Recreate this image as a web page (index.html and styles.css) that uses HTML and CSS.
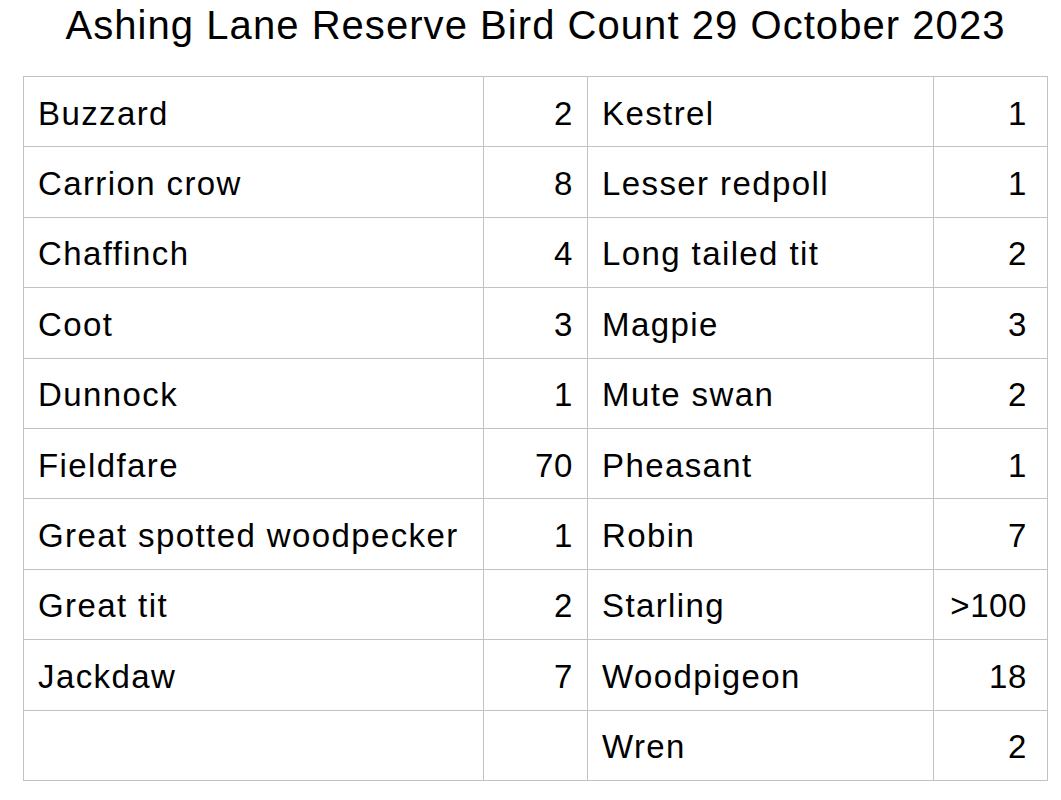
FILE: index.html
```html
<!DOCTYPE html>
<html>
<head>
<meta charset="utf-8">
<link rel="stylesheet" href="styles.css">
</head>
<body>
<div class="page">
  <h1 class="title">Ashing Lane Reserve Bird Count 29 October 2023</h1>
  <table class="counts">
    <colgroup>
      <col class="c-name1"><col class="c-num1"><col class="c-name2"><col class="c-num2">
    </colgroup>
    <tbody>
      <tr><td class="name">Buzzard</td><td class="num">2</td><td class="name">Kestrel</td><td class="num last">1</td></tr>
      <tr><td class="name">Carrion crow</td><td class="num">8</td><td class="name">Lesser redpoll</td><td class="num last">1</td></tr>
      <tr><td class="name">Chaffinch</td><td class="num">4</td><td class="name">Long tailed tit</td><td class="num last">2</td></tr>
      <tr><td class="name">Coot</td><td class="num">3</td><td class="name">Magpie</td><td class="num last">3</td></tr>
      <tr><td class="name">Dunnock</td><td class="num">1</td><td class="name">Mute swan</td><td class="num last">2</td></tr>
      <tr><td class="name">Fieldfare</td><td class="num">70</td><td class="name">Pheasant</td><td class="num last">1</td></tr>
      <tr><td class="name">Great spotted woodpecker</td><td class="num">1</td><td class="name">Robin</td><td class="num last">7</td></tr>
      <tr><td class="name">Great tit</td><td class="num">2</td><td class="name">Starling</td><td class="num last">&gt;100</td></tr>
      <tr><td class="name">Jackdaw</td><td class="num">7</td><td class="name">Woodpigeon</td><td class="num last">18</td></tr>
      <tr><td class="name"></td><td class="num"></td><td class="name">Wren</td><td class="num last">2</td></tr>
    </tbody>
  </table>
</div>
</body>
</html>
```

FILE: styles.css
```css
html, body {
  margin: 0;
  padding: 0;
  background: #ffffff;
}
body {
  font-family: "Liberation Sans", Arial, sans-serif;
  color: #000;
}
.page {
  padding: 0 0 0 23px;
  width: 1025px;
}
.title {
  margin: 0;
  height: 76px;
  font-size: 40px;
  font-weight: normal;
  line-height: 50px;
  text-align: center;
  letter-spacing: 1.05px;
  white-space: nowrap;
}
.counts {
  border-collapse: collapse;
  table-layout: fixed;
  width: 1025px;
}
.c-name1 { width: 460px; }
.c-num1 { width: 104px; }
.c-name2 { width: 346px; }
.c-num2 { width: 114px; }
.counts td {
  border: 1px solid #c2c2c2;
  height: 65.4px;
  padding: 4px 14px 0 14px;
  font-size: 33px;
  line-height: 36px;
  letter-spacing: 1.4px;
  vertical-align: middle;
  white-space: nowrap;
}
.counts td.num {
  text-align: right;
  padding-right: 14px;
  letter-spacing: 0.6px;
}
.counts td.num.last {
  padding-right: 20px;
}
```
